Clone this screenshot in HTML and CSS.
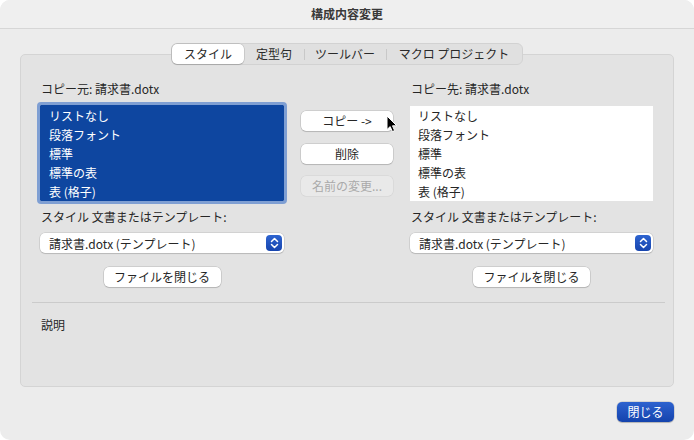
FILE: index.html
```html
<!DOCTYPE html>
<html lang="ja">
<head>
<meta charset="utf-8">
<link rel="stylesheet" href="styles.css">
</head>
<body>
<div class="window">
  <div class="titlebar">構成内容変更</div>
  <div class="content">
    <div class="tabs">
      <div class="tab sel t1">スタイル</div>
      <div class="tab t2">定型句</div>
      <div class="tab t3 sep">ツールバー</div>
      <div class="tab t4 sep">マクロ プロジェクト</div>
    </div>
    <div class="panel">
      <div class="grid">
        <div class="col">
          <div class="label">コピー元: 請求書.dotx</div>
          <div class="list left">
            <div class="row">リストなし</div>
            <div class="row">段落フォント</div>
            <div class="row">標準</div>
            <div class="row">標準の表</div>
            <div class="row">表 (格子)</div>
          </div>
          <div class="label lab2">スタイル 文書またはテンプレート:</div>
          <div class="select"><span>請求書.dotx (テンプレート)</span><span class="stepper"><svg width="9" height="12" viewBox="0 0 9 12"><path d="M1.5 4.5 L4.5 1.5 L7.5 4.5 M1.5 7.5 L4.5 10.5 L7.5 7.5" fill="none" stroke="#fff" stroke-width="1.5" stroke-linecap="round" stroke-linejoin="round"/></svg></span></div>
          <div class="btnrow"><div class="btn wide">ファイルを閉じる</div></div>
        </div>
        <div class="mid">
          <div class="btn copy">コピー -&gt;<svg class="cursor" width="12" height="18" viewBox="0 0 12 18"><path d="M1 1 L1 14.5 L4.2 11.6 L6.4 16.6 L8.6 15.6 L6.5 10.8 L10.8 10.8 Z" fill="#000" stroke="#fff" stroke-width="1" stroke-linejoin="round"/></svg></div>
          <div class="btn">削除</div>
          <div class="btn disabled">名前の変更...</div>
        </div>
        <div class="col">
          <div class="label">コピー先: 請求書.dotx</div>
          <div class="list right">
            <div class="row">リストなし</div>
            <div class="row">段落フォント</div>
            <div class="row">標準</div>
            <div class="row">標準の表</div>
            <div class="row">表 (格子)</div>
          </div>
          <div class="label lab2">スタイル 文書またはテンプレート:</div>
          <div class="select"><span>請求書.dotx (テンプレート)</span><span class="stepper"><svg width="9" height="12" viewBox="0 0 9 12"><path d="M1.5 4.5 L4.5 1.5 L7.5 4.5 M1.5 7.5 L4.5 10.5 L7.5 7.5" fill="none" stroke="#fff" stroke-width="1.5" stroke-linecap="round" stroke-linejoin="round"/></svg></span></div>
          <div class="btnrow"><div class="btn wide">ファイルを閉じる</div></div>
        </div>
      </div>
      <div class="separator"></div>
      <div class="desc">説明</div>
    </div>
    <div class="footer"><div class="btn primary">閉じる</div></div>
  </div>
</div>
</body>
</html>
```

FILE: styles.css
```css
* { box-sizing: border-box; }
html, body { margin: 0; padding: 0; background: #ffffff; }
body {
  font-family: "Noto Sans CJK JP", "Noto Sans", sans-serif;
  font-size: 12px;
  color: #262626;
}
.window {
  width: 694px;
  height: 440px;
  background: #ececec;
  border-radius: 10px;
  overflow: hidden;
}
.titlebar {
  height: 29px;
  line-height: 27px;
  text-align: center;
  font-size: 12px;
  font-weight: bold;
  color: #3a3a3a;
  background: #efefef;
  border-bottom: 1px solid #d6d6d6;
}
.content {
  padding: 14px 20px 0 20px;
}
.tabs {
  position: relative;
  z-index: 2;
  margin: 0 auto -11px;
  width: 352px;
  height: 22px;
  display: flex;
  background: #e0e0e0;
  border: 1px solid #d2d2d2;
  border-radius: 6px;
  padding: 0;
}
.tab {
  height: 20px;
  line-height: 19px;
  text-align: center;
  font-size: 12px;
  color: #2a2a2a;
  position: relative;
}
.tab.sel {
  background: #ffffff;
  border-radius: 5px;
  box-shadow: 0 0 0 0.5px rgba(0,0,0,0.18), 0 1px 1px rgba(0,0,0,0.12);
}
.tab.sep::before {
  content: "";
  position: absolute;
  left: 0;
  top: 5px;
  height: 11px;
  border-left: 1px solid #c8c8c8;
}
.t1 { width: 72px; }
.t2 { width: 60px; }
.t3 { width: 82px; }
.t4 { width: 136px; }
.panel {
  height: 333px;
  background: #e3e3e3;
  border: 1px solid #d4d4d4;
  border-radius: 5px;
  padding: 0 0 0 0;
}
.grid {
  display: grid;
  grid-template-columns: 244px 92px 243px;
  column-gap: 17px;
  padding: 26px 0 0 19px;
}
.label {
  height: 16px;
  line-height: 16px;
  padding-left: 1px;
  color: #262626;
}
.list {
  margin-top: 8px;
  height: 96px;
  padding-top: 1px;
}
.list .row {
  height: 19px;
  line-height: 19px;
}
.list.left {
  background: #0e46a0;
  color: #ffffff;
  outline: 3px solid #7f9fd3;
  border-radius: 1px;
  padding-left: 9px;
}
.list.right {
  background: #ffffff;
  padding-left: 8px;
  margin-top: 9px;
  height: 95px;
  padding-top: 0;
}
.lab2 { margin-top: 8px; }
.select {
  margin-top: 8px;
  height: 20px;
  background: #ffffff;
  border-radius: 5px;
  box-shadow: 0 0 0 0.5px rgba(0,0,0,0.15), 0 1px 1px rgba(0,0,0,0.12);
  display: flex;
  align-items: center;
  justify-content: space-between;
  padding: 0 2px 0 9px;
  color: #262626;
}
.stepper {
  width: 16px;
  height: 16px;
  border-radius: 4px;
  background: linear-gradient(#2e64d0, #1745ae);
  display: flex;
  align-items: center;
  justify-content: center;
}
.btnrow {
  margin-top: 14px;
  display: flex;
  justify-content: center;
}
.btn {
  height: 20px;
  line-height: 20px;
  background: #ffffff;
  border-radius: 5px;
  box-shadow: 0 0 0 0.5px rgba(0,0,0,0.18), 0 1px 1px rgba(0,0,0,0.12);
  text-align: center;
  color: #262626;
  position: relative;
}
.btn.wide { width: 117px; }
.mid {
  padding-top: 30px;
  display: flex;
  flex-direction: column;
  gap: 13px;
}
.mid .disabled {
  margin-top: -1px;
  background: #e9e9e9;
  color: #aaaaaa;
  box-shadow: 0 0 0 0.5px rgba(0,0,0,0.08);
}
.cursor {
  position: absolute;
  left: 85px;
  top: 4px;
}
.separator {
  margin: 15px 8px 0 11px;
  border-top: 1px solid #cbcbcb;
}
.desc {
  margin-top: 14px;
  padding-left: 20px;
  line-height: 16px;
}
.footer {
  display: flex;
  justify-content: flex-end;
  padding-top: 15px;
}
.btn.primary {
  width: 57px;
  color: #ffffff;
  background: linear-gradient(#2d62cf, #1443ad);
  box-shadow: 0 0 0 0.5px rgba(0,0,0,0.2), 0 1px 1px rgba(0,0,0,0.15);
}
```
